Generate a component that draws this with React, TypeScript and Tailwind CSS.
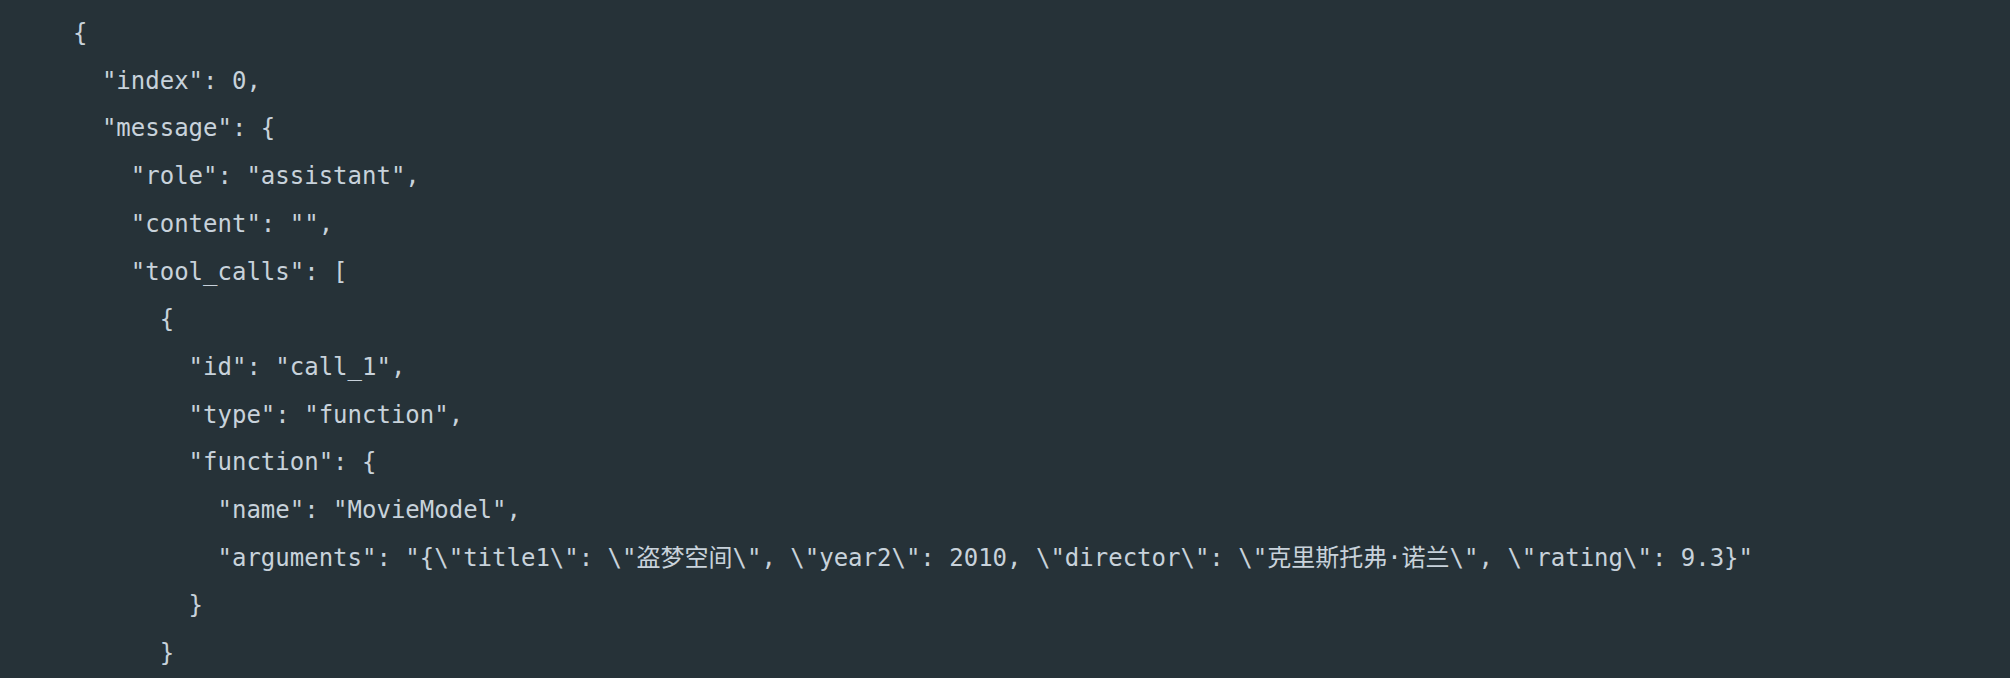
import React from 'react';

// only the part of the JSON that is visible in the viewport
const lines = [
  '{',
  '  "index": 0,',
  '  "message": {',
  '    "role": "assistant",',
  '    "content": "",',
  '    "tool_calls": [',
  '      {',
  '        "id": "call_1",',
  '        "type": "function",',
  '        "function": {',
  '          "name": "MovieModel",',
  '          "arguments": "{\\"title1\\": \\"盗梦空间\\", \\"year2\\": 2010, \\"director\\": \\"克里斯托弗·诺兰\\", \\"rating\\": 9.3}"',
  '        }',
  '      }',
];

export default function App() {
  return (
    <div className="h-[678px] w-full overflow-hidden bg-[#263238]">
      <pre className="m-0 pl-[73px] pt-[10px] text-[24px] leading-[47.7px] text-[#c8d2db] whitespace-pre font-['DejaVu_Sans_Mono','Noto_Sans_CJK_SC',monospace]">
        {lines.map((line, i) => (
          <div key={i}>{line}</div>
        ))}
      </pre>
    </div>
  );
}
